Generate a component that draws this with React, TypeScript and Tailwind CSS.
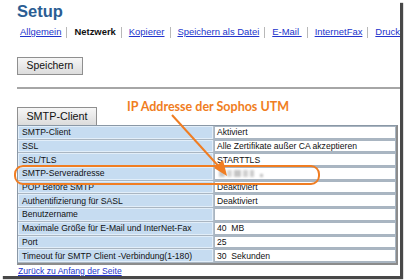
import React from "react";

const rows: [string, string][] = [
  ["SMTP-Client", "Aktiviert"],
  ["SSL", "Alle Zertifikate außer CA akzeptieren"],
  ["SSL/TLS", "STARTTLS"],
  ["SMTP-Serveradresse", "__IP__"],
  ["POP Before SMTP", "Deaktiviert"],
  ["Authentifizierung für SASL", "Deaktiviert"],
  ["Benutzername", ""],
  ["Maximale Größe für E-Mail und InterNet-Fax", "40\u00a0\u00a0MB"],
  ["Port", "25"],
  ["Timeout für SMTP Client -Verbindung(1-180)", "30\u00a0\u00a0Sekunden"],
];

const tabs = ["Allgemein", "Netzwerk", "Kopierer", "Speichern als Datei", "E-Mail\u00a0", "InternetFax", "Druck"];

export default function App() {
  return (
    <div className="w-[404px] h-[280px] bg-white overflow-hidden relative" style={{ fontFamily: '"Liberation Sans", Arial, sans-serif' }}>
      <div className="w-[400px] h-[276px] bg-white shadow-[3px_3px_1px_rgba(40,40,40,0.85)] relative overflow-hidden">
        <div className="pl-[17px] pt-[1px]">
          <div className="text-[16.5px] font-bold text-[#2b5d93] leading-[20px]">Setup</div>
          <div className="flex items-center mt-[5px] text-[9.45px] leading-[12px] pl-[3px] whitespace-nowrap">
            {tabs.map((t, i) => (
              <React.Fragment key={t}>
                {i > 0 && <span className="inline-block w-[1px] h-[11px] bg-[#b8b8b8] ml-[5px] mr-[7.5px]" />}
                {t === "Netzwerk" ? (
                  <span className="font-bold text-[#111]">{t}</span>
                ) : (
                  <span className="text-[#2233cc] underline">{t}</span>
                )}
              </React.Fragment>
            ))}
          </div>
          <div className="mt-[19px] w-[66px] h-[18px] border border-[#8f8f8f] bg-gradient-to-b from-[#f6f6f6] to-[#dcdcdc] flex items-center justify-center text-[10.4px] text-[#111]">
            Speichern
          </div>
        </div>
        <div className="ml-[17px] mt-[12px] h-[2px] bg-[#a6a6a6]" />
        <div className="pl-[17px] mt-[18px]">
          <div className="w-[80px] h-[18px] border border-[#8f8f8f] border-b-0 bg-gradient-to-b from-[#f6f6f6] to-[#dcdcdc] flex items-center justify-center text-[10.8px] text-[#111]">
            SMTP-Client
          </div>
          <div className="w-[381px] border-t border-l border-[#8a98a6] border-r-[2px] border-r-[#8c8c8c] border-b-[2px] border-b-[#8c8c8c] bg-[#b4c0cc] text-[8.6px] leading-[12px] text-[#111]">
            {rows.map(([k, v]) => (
              <div key={k} className="flex h-[13.7px] border-b border-[#aab6c2]">
                <div className="w-[195px] bg-[#c6dcf1] border border-[#e2eef9] pl-[3px] flex items-center whitespace-nowrap">{k}</div>
                <div className="flex-1 bg-white border border-[#a9b5c1] ml-[1px] pl-[2px] flex items-center whitespace-nowrap">
                  {v === "__IP__" ? (
                    <div className="flex items-center gap-[2px] blur-[0.8px] ml-[2px]">
                      <span className="w-[6px] h-[7px] bg-[#c9c9c9]" />
                      <span className="w-[5px] h-[7px] bg-[#d6d6d6]" />
                      <span className="w-[7px] h-[7px] bg-[#c4c4c4]" />
                      <span className="w-[5px] h-[7px] bg-[#d0d0d0]" />
                      <span className="w-[4px] h-[7px] bg-[#cccccc]" />
                      <span className="w-[3px] h-[3px] bg-[#bdbdbd] ml-[4px] mt-[4px]" />
                    </div>
                  ) : (
                    v
                  )}
                </div>
              </div>
            ))}
          </div>
          <div className="text-[8.6px] leading-[10px] mt-[1px] pl-[1px] text-[#2233cc] underline">Zurück zu Anfang der Seite</div>
        </div>

        <div className="absolute left-[127px] top-[98px] text-[12.5px] font-bold text-[#f07d22] whitespace-nowrap" style={{ fontFamily: 'Lato, "Open Sans", sans-serif' }}>
          IP Addresse der Sophos UTM
        </div>
        <div className="absolute left-[14px] top-[165px] w-[306px] h-[20px] border-2 border-[#f07d22] rounded-[9px]" />
        <svg className="absolute left-0 top-0" width="400" height="276" viewBox="0 0 400 276">
          <line x1="172" y1="115" x2="222" y2="170" stroke="#f07d22" strokeWidth="2" />
          <polygon points="227,176 214,168 223,160" fill="#f07d22" />
        </svg>
      </div>
    </div>
  );
}
